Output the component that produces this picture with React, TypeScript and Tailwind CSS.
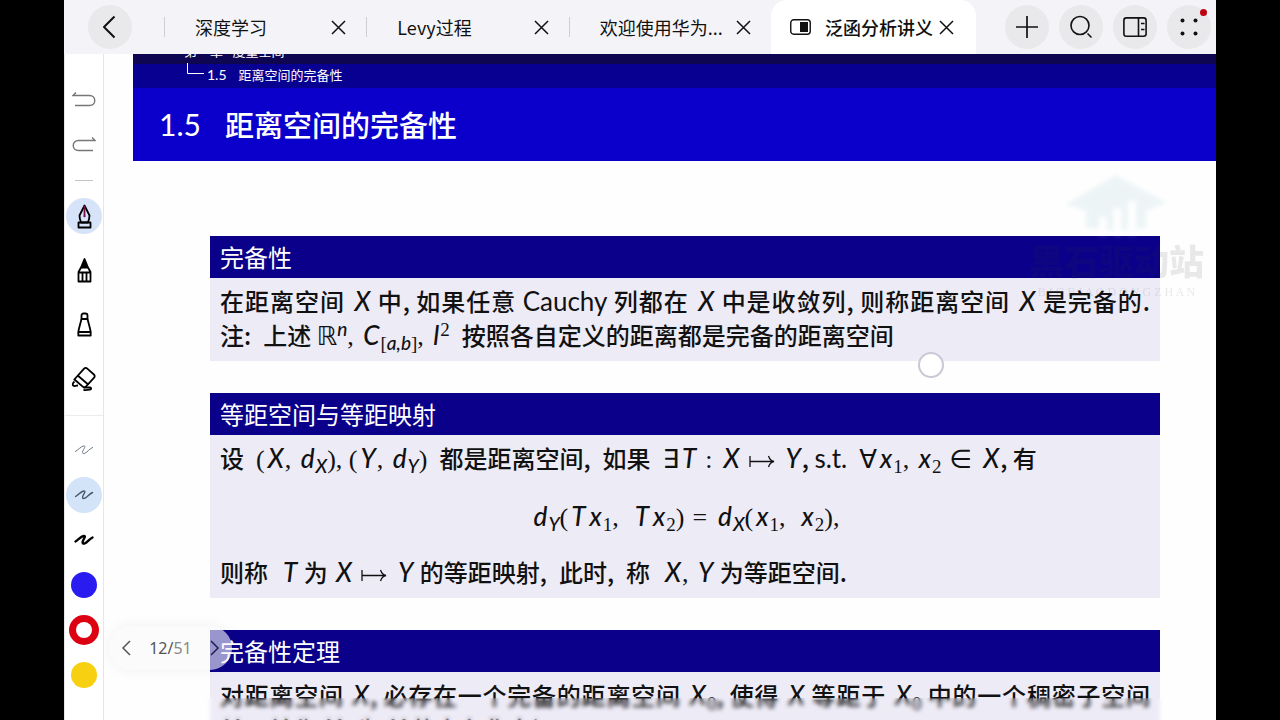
import { useState } from "react";
import type { ReactNode } from "react";
import clsx from "clsx";

const tabs = [
  { id: "deep", title: "深度学习" },
  { id: "levy", title: "Levy过程" },
  { id: "welcome", title: "欢迎使用华为..." },
  { id: "functional", title: "泛函分析讲义" },
];

const colors = [
  { name: "blue", dot: "bg-[#2a1bf0]" },
  { name: "red", dot: "bg-[#dc0012]" },
  { name: "yellow", dot: "bg-[#f8d012]" },
];

const pens = [
  {
    name: "钢笔",
    icon: (
      <>
        <path d="M12 1.500 7 11.500c0 3 .8 5 1.600 7h6.800c.8-2 1.600-4 1.600-7z" />
        <path d="M12 2v9" stroke="#7a1050" />
        <circle cx="12" cy="12" r="1.200" fill="#7a1050" stroke="none" />
        <path d="M6 18.500h12v5H6z" />
      </>
    ),
  },
  {
    name: "铅笔",
    icon: (
      <>
        <path d="m12 1-3.500 8.500h7z" fill="currentColor" />
        <path d="M8.500 9.500 6 14v9.500h12V14l-2.500-4.500M6 14.500h12M10 14.500v9M14 14.500v9" />
      </>
    ),
  },
  {
    name: "马克笔",
    icon: (
      <>
        <path d="M9 7V3.500c0-1 .8-2 2-2h2c1.200 0 2 1 2 2V7z" />
        <path d="M9 7 6.500 16.500l-.7 3.500v3.500h12.400V20l-.7-3.500L15 7M5.800 20h12.400" />
      </>
    ),
  },
  {
    name: "橡皮",
    icon: (
      <>
        <path d="m1.800 13.500 9.800-10.800c.9-1 2.200-1 3.200-.1l6.600 5.900c1 .9 1.100 2.200.2 3.200l-8.200 8.900c-.9 1-2.200 1-3.200.1l-8.200-7.200z" />
        <path d="m5.500 9.800 10.200 8.700M2 15.500c-2 1.500-2.500 4-.5 4.500 1.500.3 3-.5 4-.5M11 21.500h6.500c1.500 0 1.500 2 0 2.200-2 .3-4 .5-6.500.3" />
      </>
    ),
  },
];

const strokes = [
  { name: "细", width: 1, tone: "text-gray-500" },
  { name: "中", width: 1.4, tone: "text-slate-600" },
  { name: "粗", width: 2.4, tone: "text-black" },
];

const CloseIcon = () => (
  <svg className="h-[15px] w-[15px]" viewBox="0 0 15 15" fill="none" stroke="currentColor" strokeWidth="1.500">
    <path d="m1 1 13 13M14 1 1 14" />
  </svg>
);

const IconButton = ({ label, children }: { label: string; children: ReactNode }) => (
  <button
    type="button"
    aria-label={label}
    className="relative flex h-11 w-11 shrink-0 items-center justify-center rounded-full bg-[#e9e9eb] text-[#111]">
    {children}
  </button>
);

const TopBar = () => {
  const [active, setActive] = useState("functional");

  return (
    <header className="flex h-[54px] shrink-0 items-center bg-[#f4f4f8]">
      <div className="w-[100px] shrink-0 pl-6">
        <IconButton label="返回">
          <svg className="h-6 w-6" viewBox="0 0 24 24" fill="none" stroke="currentColor" strokeWidth="2">
            <path d="M16.500 1.500 6 12l10.500 10.500" strokeLinejoin="round" />
          </svg>
        </IconButton>
      </div>
      <nav className="flex h-full min-w-0 flex-1">
        {tabs.map((tab) => (
          <div
            key={tab.id}
            className={clsx(
              "relative flex items-center justify-between text-lg whitespace-nowrap text-[#111]",
              tab.id === active
                ? "shrink-0 gap-[6px] rounded-t-2xl bg-white pr-[22px] pl-[19px] font-medium"
                : "min-w-0 flex-1 pr-5 pl-[31px] before:absolute before:left-0 before:h-5 before:w-px before:bg-[#cfcfd3]"
            )}>
            <button type="button" className="flex items-center" onClick={() => setActive(tab.id)}>
              {tab.id === active && (
                <svg className="mr-[14px] h-4 w-[21px]" viewBox="0 0 21 16" fill="none" stroke="#111">
                  <rect x=".75" y=".75" width="19.500" height="14.500" rx="3" strokeWidth="1.400" />
                  <path d="M10 3h8v10h-8z" fill="#111" stroke="none" />
                </svg>
              )}
              {tab.title}
            </button>
            <button type="button" aria-label={`关闭 ${tab.title}`} className="shrink-0">
              <CloseIcon />
            </button>
          </div>
        ))}
      </nav>
      <div className="flex shrink-0 gap-[10px] pr-[5px] pl-[29px]">
        <IconButton label="新建">
          <svg className="h-6 w-6" viewBox="0 0 24 24" fill="none" stroke="currentColor" strokeWidth="1.700">
            <path d="M12 1v22M1 12h22" />
          </svg>
        </IconButton>
        <IconButton label="搜索">
          <svg className="h-6 w-6" viewBox="0 0 24 24" fill="none" stroke="currentColor" strokeWidth="1.600">
            <circle cx="11" cy="10.500" r="9" />
            <path d="m18.500 18.500 4 4" />
          </svg>
        </IconButton>
        <IconButton label="分屏">
          <svg className="h-6 w-6" viewBox="0 0 24 24" fill="none" stroke="currentColor" strokeWidth="1.600">
            <rect x=".9" y="2.900" width="22.200" height="18.400" rx="2.500" />
            <path d="M15.500 3v18M18 8.500h3.500M18 14.500h3.500" />
          </svg>
        </IconButton>
        <IconButton label="更多">
          <svg className="h-6 w-6" viewBox="0 0 24 24" fill="currentColor">
            <circle cx="5.500" cy="5.500" r="2" />
            <circle cx="18.500" cy="5.500" r="2" />
            <circle cx="5.500" cy="18.500" r="2" />
            <circle cx="18.500" cy="18.500" r="2" />
          </svg>
          <span className="absolute top-1 right-1 h-[7px] w-[7px] rounded-full bg-[#c00012]" />
        </IconButton>
      </div>
    </header>
  );
};

const ToolBar = () => {
  const [pen, setPen] = useState("钢笔");
  const [stroke, setStroke] = useState("中");
  const [color, setColor] = useState("red");

  return (
    <aside className="flex w-10 shrink-0 flex-col items-center border-x border-[#e6e6e9] bg-white pt-[23px]">
      <button type="button" aria-label="撤销" className="flex h-[45px] items-center text-[#777]">
        <svg className="h-4 w-6" viewBox="0 0 24 16" fill="none" stroke="currentColor" strokeWidth="1.400">
          <path d="M4 .5 1 3.500h16.500c7 0 7 10 0 10H3" />
        </svg>
      </button>
      <button type="button" aria-label="重做" className="flex h-[45px] items-center text-[#777]">
        <svg className="h-4 w-6" viewBox="0 0 24 16" fill="none" stroke="currentColor" strokeWidth="1.400">
          <path d="m20 .5 3 3H6.500c-7 0-7 10 0 10H21" />
        </svg>
      </button>
      <hr className="mt-[13px] mb-2 w-[18px] border-[#c4c4c8]" />
      {pens.map((item) => (
        <button
          key={item.name}
          type="button"
          aria-label={item.name}
          onClick={() => setPen(item.name)}
          className="flex h-[54px] items-center">
          <span
            className={clsx(
              "flex h-9 w-9 items-center justify-center rounded-full",
              item.name === pen && "bg-[#d6e3f8]"
            )}>
            <svg
              className="h-[25px] w-[25px] overflow-visible"
              viewBox="0 0 24 25"
              fill="none"
              stroke="currentColor"
              strokeWidth="1.800"
              strokeLinejoin="round">
              {item.icon}
            </svg>
          </span>
        </button>
      ))}
      <hr className="mt-[10px] mb-[11px] w-full border-[#ececef]" />
      {strokes.map((item) => (
        <button
          key={item.name}
          type="button"
          aria-label={item.name}
          onClick={() => setStroke(item.name)}
          className={clsx("flex h-[45px] items-center", item.tone)}>
          <span
            className={clsx(
              "flex h-9 w-9 items-center justify-center rounded-full",
              item.name === stroke && "bg-[#d3e4f8]"
            )}>
            <svg
              className="h-[10px] w-5 overflow-visible"
              viewBox="0 0 20 10"
              fill="none"
              stroke="currentColor"
              strokeWidth={item.width}
              strokeLinecap="round">
              <path d="M1.500 6.500C4 5 7 1.500 9.500 1s1 2-.2 4c-1.300 2.500-.8 4.500 1.700 3.200 2.500-1.200 4-4 7.500-5.700" />
            </svg>
          </span>
        </button>
      ))}
      {colors.map((item) => (
        <label key={item.name} className="flex h-[45px] items-center">
          <input
            type="radio"
            name="color"
            aria-label={item.name}
            checked={item.name === color}
            onChange={() => setColor(item.name)}
            className="peer sr-only"
          />
          <span
            className={clsx(
              "flex items-center justify-center rounded-full",
              item.name === color ? "h-[30px] w-[30px]" : "h-[26px] w-[26px]",
              item.dot
            )}>
            {item.name === color && <span className="h-4 w-4 rounded-full bg-white" />}
          </span>
        </label>
      ))}
    </aside>
  );
};

// Slanted math letter
const V = ({ children }: { children: ReactNode }) => (
  <i className="mr-px ml-[3px] font-['Lato'] text-[26px] font-medium">{children}</i>
);

// Upright math symbol
const S = ({ children }: { children: ReactNode }) => (
  <span className="font-['Liberation_Serif','DejaVu_Sans'] text-[26px] font-normal">{children}</span>
);

// Relation sign with room on both sides
const Rel = ({ children }: { children: ReactNode }) => (
  <span className="mx-2 font-['Liberation_Serif','DejaVu_Sans'] text-[26px] font-normal">{children}</span>
);

const Sub = ({ children, italic }: { children: ReactNode; italic?: boolean }) => (
  <sub
    className={clsx(
      "text-[19px]",
      italic ? "font-['Lato'] font-medium italic" : "font-['Liberation_Serif'] font-normal"
    )}>
    {children}
  </sub>
);

const MapsTo = () => (
  <svg className="mx-2 inline-block h-4 w-[26px]" viewBox="0 0 26 16" fill="none" stroke="currentColor" strokeWidth="1.300">
    <path d="M1 3v11M1 8.500h24M19.500 3c1 3 3 5 5.500 5.500-2.500.5-4.500 2.500-5.500 5.500" />
  </svg>
);

const Block = ({ title, children }: { title: string; children: ReactNode }) => (
  <section className="mb-8 text-2xl leading-[34px] whitespace-nowrap">
    <h2 className="h-[42px] bg-[#0a008a] px-[10px] leading-[42px] text-white">{title}</h2>
    <div className="bg-[#edebf6] px-[10px] pt-[6px] pb-[9px] font-medium text-[#111]">{children}</div>
  </section>
);

const Line = ({ children, justify }: { children: ReactNode; justify?: boolean }) => (
  <p className={clsx("h-[34px]", justify && "[text-align-last:justify]")}>{children}</p>
);

const Watermark = () => (
  <div className="pointer-events-none absolute top-[118px] right-3 flex flex-col items-center font-['Liberation_Serif','Noto_Sans_CJK_SC'] text-[#333] opacity-10">
    <svg className="h-[72px] w-[100px] blur-[2px]" viewBox="0 0 110 72">
      <path d="M0 32 55 0l55 30-22 9v18c-18 4-48 5-66 0V39z" fill="#5aa6b4" />
      <path d="M36 68V46h9v22zM52 68V36h9v32zM68 68V28h9v40z" fill="#fff" />
    </svg>
    <span className="text-[35px] leading-10 font-black">黑石驱动站</span>
    <span className="text-xs leading-4">B I G B I A O D O N G Z H A N</span>
  </div>
);

const Slide = () => (
  <article className="ml-[29px]">
    <div className="h-[34px] overflow-hidden bg-linear-to-b from-[#0e0650] from-30% to-[#080090] to-30% text-white">
      <div className="-mt-[15px] pl-[51px] text-[13px] leading-6">
        <p>第一章&ensp; 度量空间</p>
        <p className="flex items-center">
          <svg className="ml-[3px] h-6 w-[17px]" viewBox="0 0 17 24" fill="none" stroke="currentColor">
            <path d="M.5 0v10.500H17" />
          </svg>
          <span className="mr-3 ml-[3px] font-['Lato'] text-sm leading-6">1.5</span>
          距离空间的完备性
        </p>
      </div>
    </div>
    <h1 className="flex h-[73px] items-center bg-[#0b00cb] pl-[26px] text-[29px] font-medium text-white">
      <span className="mr-6 font-['Lato'] text-[30px] font-normal">1.5</span>
      距离空间的完备性
    </h1>
    <div className="pt-[75px] pr-14 pl-[77px]">
      <Block title="完备性">
        <Line justify>
          在距离空间 <V>X</V> 中, 如果任意{" "}
          <span className="font-['Lato'] text-[26px] font-normal">Cauchy</span> 列都在 <V>X</V>{" "}
          中是收敛列, 则称距离空间 <V>X</V> 是完备的.
        </Line>
        <Line>
          注:&ensp;上述 <S>ℝ</S>
          <sup className="font-['Lato'] text-[19px] font-medium italic">n</sup>
          <S>, </S>
          <V>C</V>
          <Sub>[</Sub>
          <Sub italic>a,b</Sub>
          <Sub>]</Sub>
          <S>, </S>
          <V>l</V>
          <sup className="font-['Liberation_Serif'] text-[19px] font-normal">2</sup>
          &ensp;按照各自定义的距离都是完备的距离空间
        </Line>
      </Block>
      <Block title="等距空间与等距映射">
        <Line>
          设&ensp;<S>(</S>
          <V>X</V>
          <S>, </S>
          <V>d</V>
          <Sub italic>X</Sub>
          <S>), (</S>
          <V>Y</V>
          <S>, </S>
          <V>d</V>
          <Sub italic>Y</Sub>
          <S>)</S>&ensp;都是距离空间,&ensp;如果&ensp;<S>∃</S>
          <V>T</V>
          <Rel>:</Rel>
          <V>X</V>
          <MapsTo />
          <V>Y</V>, <span className="font-['Lato'] text-[26px] font-normal">s.t.</span>&ensp;
          <S>∀</S>
          <V>x</V>
          <Sub>1</Sub>
          <S>, </S>
          <V>x</V>
          <Sub>2</Sub>
          <Rel>∈</Rel>
          <V>X</V>, 有
        </Line>
        <p className="flex h-[80px] items-center justify-center pt-1">
          <span>
            <V>d</V>
            <Sub italic>Y</Sub>
            <S>(</S>
            <V>T</V>
            <V>x</V>
            <Sub>1</Sub>
            <S>,&ensp;</S>
            <V>T</V>
            <V>x</V>
            <Sub>2</Sub>
            <S>)</S>
            <Rel>=</Rel>
            <V>d</V>
            <Sub italic>X</Sub>
            <S>(</S>
            <V>x</V>
            <Sub>1</Sub>
            <S>,&ensp;</S>
            <V>x</V>
            <Sub>2</Sub>
            <S>),</S>
          </span>
        </p>
        <Line>
          则称&ensp;<V>T</V> 为 <V>X</V>
          <MapsTo />
          <V>Y</V> 的等距映射,&ensp;此时,&ensp;称&ensp;<V>X</V>
          <S>, </S>
          <V>Y</V> 为等距空间.
        </Line>
      </Block>
      <Block title="完备性定理">
        <Line justify>
          对距离空间 <V>X</V>, 必存在一个完备的距离空间 <V>X</V>
          <Sub>0</Sub>, 使得 <V>X</V> 等距于 <V>X</V>
          <Sub>0</Sub> 中的一个稠密子空间
        </Line>
        <Line>
          <V>X</V>
          <Sub>0</Sub>,&ensp;并称 <V>X</V>
          <Sub>0</Sub> 为 <V>X</V> 的完备化空间.
        </Line>
      </Block>
    </div>
  </article>
);

const PageSwitcher = () => (
  <div className="absolute bottom-[50px] left-[5px] flex h-11 w-[123px] items-center justify-between rounded-full bg-[#f8f8fa]/60 px-3 text-[#555] shadow-[0_0_14px_rgba(0,0,0,0.06)]">
    <button type="button" aria-label="上一页">
      <svg className="h-4 w-[10px]" viewBox="0 0 10 16" fill="none" stroke="currentColor" strokeWidth="1.500">
        <path d="M9 1 2 8l7 7" />
      </svg>
    </button>
    <span className="font-['Noto_Sans'] text-base">
      12/<span className="text-[#888]">51</span>
    </span>
    <button type="button" aria-label="下一页" className="text-[#222050]">
      <svg className="h-4 w-[10px]" viewBox="0 0 10 16" fill="none" stroke="currentColor" strokeWidth="1.500">
        <path d="m1 1 7 7-7 7" />
      </svg>
    </button>
  </div>
);

export default function App() {
  return (
    <div className="h-screen bg-black px-16 font-['Noto_Sans_CJK_SC',sans-serif]">
      <div className="flex h-full flex-col overflow-hidden bg-white">
        <TopBar />
        <div className="flex min-h-0 flex-1">
          <ToolBar />
          <main className="relative min-w-0 flex-1 overflow-hidden bg-[#fefefe]">
            <Slide />
            <Watermark />
            <span className="absolute top-[298px] left-[814px] h-[26px] w-[26px] rounded-full border-2 border-[#c9c8d4] bg-white" />
            <div className="absolute inset-x-0 bottom-0 h-[22px] backdrop-blur-[2px]" />
            <PageSwitcher />
          </main>
        </div>
      </div>
    </div>
  );
}
